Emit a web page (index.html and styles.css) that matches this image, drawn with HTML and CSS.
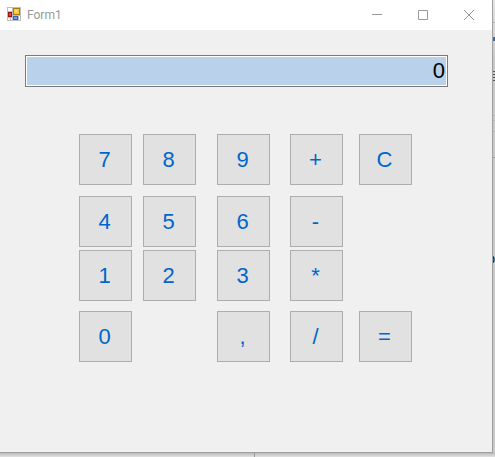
FILE: index.html
```html
<!DOCTYPE html>
<html lang="en">
<head>
    <meta charset="UTF-8">
    <title>Form1</title>
    <link rel="stylesheet" href="styles.css">
</head>
<body>
    <div class="window">
        <header class="title-bar">
            <svg class="form-icon" width="14" height="14" viewBox="0 0 14 14" shape-rendering="crispEdges">
                <rect width="14" height="14" fill="#bdbdbd"/>
                <path d="M1 1h4v3H1zM1 11h2v2H1zM4 11h1v2H4zM12 9h1v4h-1z" fill="#fff"/>
                <rect x="1" y="5" width="4" height="5" fill="#981009"/>
                <rect x="2" y="6" width="2" height="3" fill="#d94a3c"/>
                <rect x="6" y="1" width="7" height="7" fill="#b07a08"/>
                <rect x="7" y="2" width="5" height="5" fill="#fcc938"/>
                <rect x="8" y="3" width="2" height="2" fill="#ffe390"/>
                <rect x="6" y="9" width="5" height="4" fill="#2f64ce"/>
                <rect x="7" y="10" width="3" height="2" fill="#6fa0f2"/>
            </svg>
            <h1 class="title">Form1</h1>
            <button class="caption-button" type="button" aria-label="Minimize">
                <svg width="10" height="10" viewBox="0 0 10 10"><path d="M0 4.5h10" stroke="#999"/></svg>
            </button>
            <button class="caption-button" type="button" aria-label="Maximize">
                <svg width="10" height="10" viewBox="0 0 10 10"><path d="M.5.5h9v9h-9z" fill="none" stroke="#999"/></svg>
            </button>
            <button class="caption-button" type="button" aria-label="Close">
                <svg width="10" height="10" viewBox="0 0 10 10"><path d="M0 0l10 10M10 0L0 10" fill="none" stroke="#999"/></svg>
            </button>
        </header>

        <main class="form">
            <input class="display" type="text" value="0" aria-label="Result">

            <div class="keypad">
                <button class="key" type="button">7</button>
                <button class="key" type="button">8</button>
                <button class="key" type="button">9</button>
                <button class="key" type="button">+</button>
                <button class="key" type="button">C</button>

                <button class="key first" type="button">4</button>
                <button class="key" type="button">5</button>
                <button class="key" type="button">6</button>
                <button class="key" type="button">-</button>

                <button class="key first" type="button">1</button>
                <button class="key" type="button">2</button>
                <button class="key" type="button">3</button>
                <button class="key" type="button">*</button>

                <button class="key first" type="button">0</button>
                <button class="key decimal" type="button">,</button>
                <button class="key" type="button">/</button>
                <button class="key" type="button">=</button>
            </div>
        </main>
    </div>

    <!-- what shows of the window behind -->
    <div class="behind-right">
        <svg width="2" height="250" viewBox="0 0 2 250" shape-rendering="crispEdges">
            <path d="M0 22h2M0 115h2M0 120h2M0 131h2" transform="translate(0 .5)" stroke="#b4b4b4"/>
            <path d="M0 157h2" transform="translate(0 .5)" stroke="#999"/>
            <path d="M0 37h2v4H0z" fill="#3a6ea5"/>
            <path d="M0 71h2M0 74h2M0 77h2M0 80h2" transform="translate(0 .5)" stroke="#555"/>
        </svg>
        <span class="behind-text">p</span>
    </div>
    <div class="behind-bottom"></div>
</body>
</html>
```

FILE: styles.css
```css
:root {
    --form-color: #f0f0f0;
    --key-color: #e1e1e1;
    --key-border: #adadad;
    --key-text: #0066cc;
    --display-color: #b9d1ea;
}

* {
    box-sizing: border-box;
}

body {
    display: grid;
    grid-template-columns: 1fr 2px;
    grid-template-rows: 1fr 4px;
    min-height: 100vh;
    margin: 0;
    font-family: "Liberation Sans", Arial, sans-serif;
}

.window {
    display: flex;
    flex-direction: column;
    border-right: 1px solid #a0a0a0;
    border-bottom: 1px solid #a0a0a0;
    background-color: var(--form-color);
}

/* Title bar */
.title-bar {
    display: flex;
    align-items: center;
    height: 30px;
    padding-left: 7px;
    background-color: #fff;
}

.form-icon {
    margin-bottom: 2px;
}

.title {
    flex: 1;
    margin: 0 0 0 6px;
    color: #999;
    font: 12px/28px Roboto, "Open Sans", sans-serif;
}

.caption-button {
    display: flex;
    justify-content: center;
    align-items: center;
    width: 46px;
    height: 28px;
    padding: 0;
    border: none;
    background: none;
}

/* Calculator */
.form {
    display: flex;
    flex: 1;
    flex-direction: column;
    padding: 25px 44px 0 25px;
}

.display {
    width: 100%;
    height: 32px;
    padding: 0 2px;
    border: 1px solid #7a7a7a;
    border-radius: 0;
    background-color: var(--display-color);
    box-shadow: inset 0 0 0 1px #fff;
    color: #000;
    font: 22px "Liberation Sans", Arial, sans-serif;
    text-align: right;
}

.keypad {
    display: grid;
    grid-template-columns: 64px 74px 73px 69px 53px;
    grid-template-rows: 62px 54px 61px 51px;
    margin: 47px 0 0 54px;
}

.key {
    width: 53px;
    height: 51px;
    padding: 0 2px 0 0;
    border: 1px solid var(--key-border);
    border-radius: 0;
    background-color: var(--key-color);
    color: var(--key-text);
    font: 22px "Liberation Sans", Arial, sans-serif;
}

.first {
    grid-column: 1;
}

.decimal {
    grid-column: 3;
}

/* Strips past the window edge, in its shadow */
.behind-right {
    display: flex;
    flex-direction: column;
    align-items: flex-end;
    overflow: hidden;
    background: linear-gradient(#e4e4e4, #c8c8c8 60px);
}

.behind-text {
    font: 12px/18px "Liberation Sans", Arial, sans-serif;
}

.behind-bottom {
    grid-column: 1 / 3;
    background:
        linear-gradient(#999, #999) 254px 0 / 1px 100% no-repeat,
        linear-gradient(#bababa, #e2e2e2);
}
```
